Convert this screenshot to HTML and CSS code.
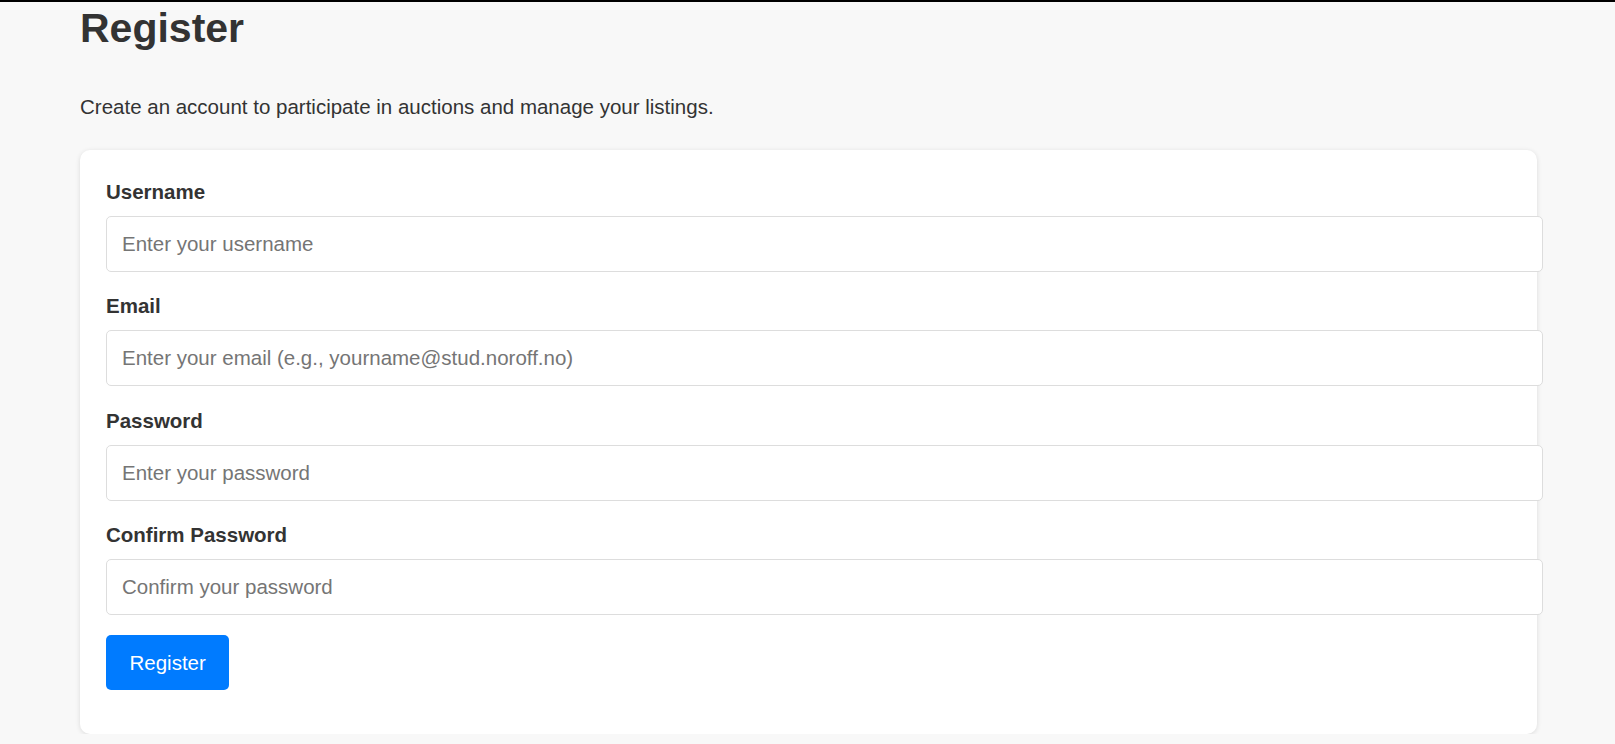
FILE: index.html
```html
<!DOCTYPE html>
<html lang="en">
<head>
<meta charset="utf-8">
<title>Register</title>
<link rel="stylesheet" href="styles.css">
</head>
<body>
<div class="topbar"></div>
<main class="container">
  <h1 class="title">Register</h1>
  <p class="intro">Create an account to participate in auctions and manage your listings.</p>
  <form class="card">
    <div class="field">
      <label class="label" for="username">Username</label>
      <input class="input" id="username" type="text" placeholder="Enter your username">
    </div>
    <div class="field">
      <label class="label" for="email">Email</label>
      <input class="input" id="email" type="email" placeholder="Enter your email (e.g., yourname@stud.noroff.no)">
    </div>
    <div class="field">
      <label class="label" for="password">Password</label>
      <input class="input" id="password" type="password" placeholder="Enter your password">
    </div>
    <div class="field">
      <label class="label" for="confirm">Confirm Password</label>
      <input class="input" id="confirm" type="password" placeholder="Confirm your password">
    </div>
    <button class="btn" type="button">Register</button>
  </form>
</main>
</body>
</html>
```
FILE: styles.css
```css
html, body {
  margin: 0;
  padding: 0;
}
body {
  background: #f8f8f8;
  font-family: "Liberation Sans", Arial, sans-serif;
  color: #333;
  overflow: hidden;
}
.topbar {
  height: 2px;
  background: #000;
}
.container {
  margin: 0 0 0 80px;
  width: 1457px;
}
.title {
  margin: 2px 0 0;
  font-size: 41px;
  line-height: 48px;
  font-weight: bold;
  color: #333;
}
.intro {
  margin: 40px 0 27.5px;
  font-size: 20.5px;
  line-height: 30px;
  color: #333;
}
.card {
  display: block;
  background: #fff;
  border-radius: 10px;
  padding: 27px 26px 43.5px;
  box-shadow: 0 1px 5px rgba(0, 0, 0, 0.12);
}
.field {
  margin-bottom: 19.5px;
}
.field:last-of-type {
  margin-bottom: 20px;
}
.label {
  display: block;
  font-size: 20.5px;
  line-height: 30px;
  font-weight: bold;
  color: #333;
  margin-bottom: 9px;
}
.input {
  display: block;
  box-sizing: content-box;
  width: 100%;
  height: 24px;
  padding: 15px;
  margin: 0;
  border: 1px solid #ddd;
  border-radius: 5px;
  background: #fff;
  font-family: "Liberation Sans", Arial, sans-serif;
  font-size: 20.5px;
  line-height: 24px;
  color: #333;
  outline: none;
}
.input::placeholder {
  color: #757575;
}
.btn {
  display: block;
  padding: 12.5px 23.5px;
  border: none;
  border-radius: 5px;
  background: #007bff;
  color: #fff;
  font-family: "Liberation Sans", Arial, sans-serif;
  font-size: 20.5px;
  line-height: 30px;
  cursor: pointer;
}
```
